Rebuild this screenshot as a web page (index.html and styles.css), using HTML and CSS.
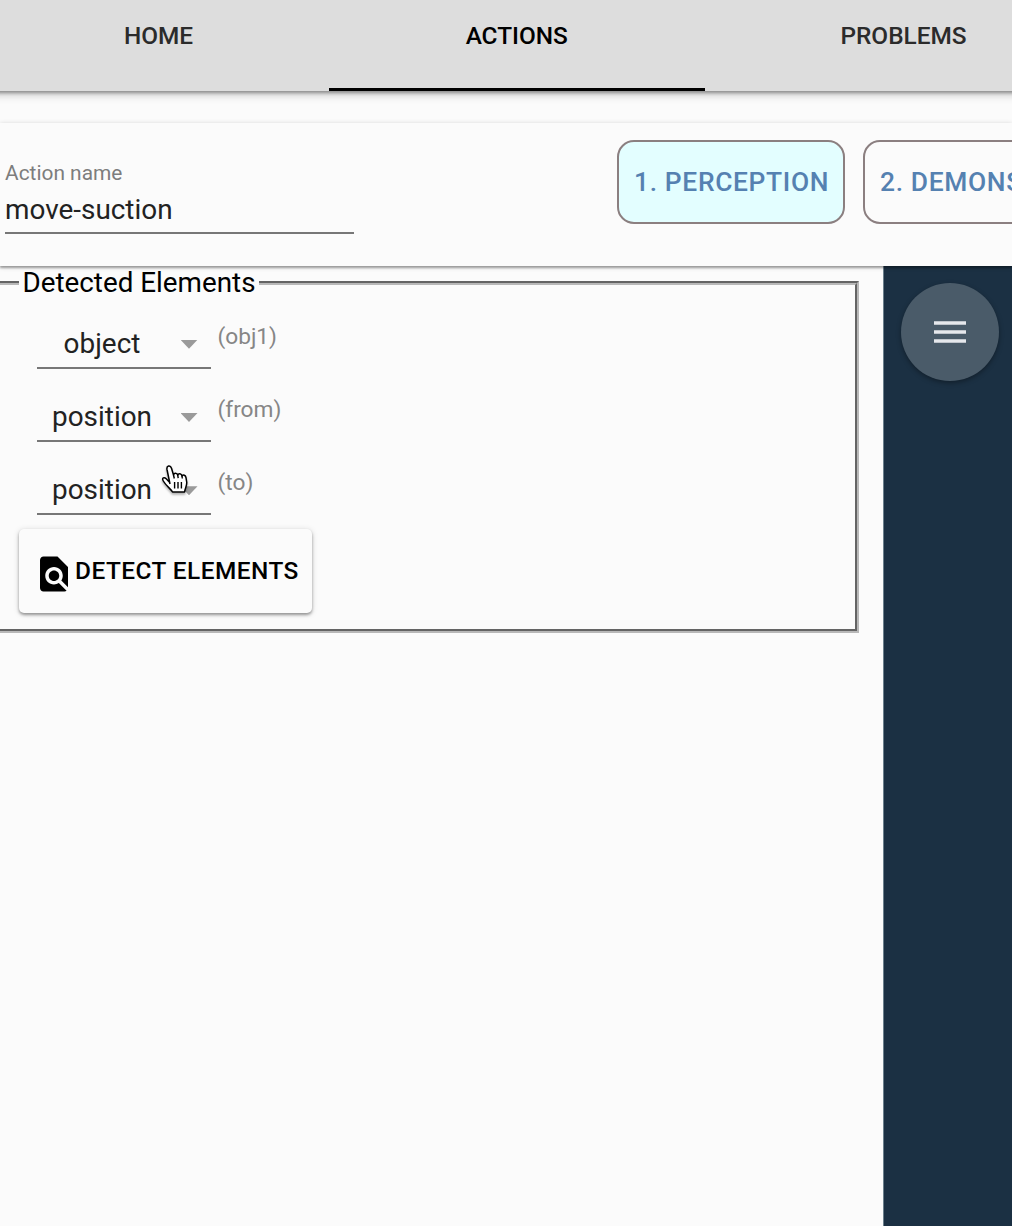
FILE: index.html
```html
<!DOCTYPE html>
<html lang="en">
<head>
<meta charset="utf-8">
<title>Actions</title>
<link rel="stylesheet" href="styles.css">
</head>
<body>
<nav class="tabs">
  <a class="tab tab-home"><span>HOME</span></a>
  <a class="tab tab-actions active"><span>ACTIONS</span></a>
  <a class="tab tab-problems"><span>PROBLEMS</span></a>
</nav>
<header class="toolbar">
  <label class="field">
    <span class="field-label">Action name</span>
    <span class="field-value">move-suction</span>
  </label>
  <div class="steps">
    <button class="step current">1. PERCEPTION</button>
    <button class="step">2. DEMONSTRATION</button>
  </div>
</header>
<main class="workspace">
  <section class="panel">
    <fieldset class="elements">
      <legend>Detected Elements</legend>
      <div class="row">
        <div class="select"><span class="value">object</span><i class="arrow"></i></div>
        <span class="hint">(obj1)</span>
      </div>
      <div class="row">
        <div class="select"><span class="value">position</span><i class="arrow"></i></div>
        <span class="hint">(from)</span>
      </div>
      <div class="row">
        <div class="select"><span class="value">position</span><i class="arrow"></i>
          <svg class="pointer" width="30" height="34" viewBox="0 0 30 34">
            <path d="M10 20 L7 5.500 C6.300 1.500 10.400 .7 11.500 4.300 L13.500 11 C14 8.700 17.200 8.700 17.700 11.200 C18.500 9 21.500 9.300 22 12 C23.300 10.300 25.600 11.200 26 13.600 L26.700 18 C27.200 21.500 25 24 24.600 28 L12.500 28 C11 25 6 21.800 3.300 17 C1.500 13.800 4.200 12.700 6.200 14.800 L9.500 18.200" fill="#fff" stroke="#000" stroke-width="1.500" stroke-linejoin="round"/>
            <path d="M14.600 18v6.500M18 18v6.500M21.400 18v6.500M13.500 11l.8 3.500M17.700 11.200l.5 3M22 12l.3 2.500" fill="none" stroke="#000" stroke-width="1.400"/>
          </svg>
        </div>
        <span class="hint">(to)</span>
      </div>
      <button class="detect">
        <svg class="detect-icon" viewBox="0 0 24 24"><path d="M20 19.590V8l-6-6H6c-1.100 0-1.990.9-1.990 2L4 20c0 1.100.89 2 1.990 2H18c.45 0 .85-.15 1.190-.4l-4.430-4.430c-.8.520-1.740.830-2.760.830-2.760 0-5-2.240-5-5s2.240-5 5-5 5 2.240 5 5c0 1.020-.31 1.960-.83 2.750L20 19.590zM9 13c0 1.660 1.340 3 3 3s3-1.340 3-3-1.340-3-3-3-3 1.340-3 3z"/></svg>
        <span>DETECT ELEMENTS</span>
      </button>
    </fieldset>
  </section>
  <aside class="viewer">
    <button class="menu" aria-label="Menu">
      <svg width="32" height="22" viewBox="0 0 32 22"><path d="M0 2h32M0 11h32M0 20h32" stroke="#e6e8ec" stroke-width="3.700"/></svg>
    </button>
  </aside>
</main>
</body>
</html>
```
FILE: styles.css
```css
* { box-sizing: border-box; }
body {
  margin: 0;
  height: 1226px;
  overflow: hidden;
  display: flex;
  flex-direction: column;
  background: #fbfbfb;
  color: #000;
  font-family: Roboto, sans-serif;
}
button { font-family: inherit; cursor: pointer; }
.tabs {
  flex: none;
  display: flex;
  height: 91px;
  margin: 0 -90px 32px -12px;
  background: #ddd;
  box-shadow: 0 2px 3px rgba(0,0,0,.3), 0 3px 9px rgba(0,0,0,.25);
}
.tab {
  flex: none;
  display: flex;
  justify-content: center;
  padding-top: 21px;
  font-size: 24.400px;
  line-height: 29px;
  font-weight: 500;
  color: #2b2b2b;
}
.tab-home { width: 341px; }
.tab-actions { width: 375.500px; }
.tab-problems { width: 398px; }
.tab.active { color: #000; border-bottom: 3.500px solid #000; }
.toolbar {
  flex: none;
  position: relative;
  z-index: 1;
  display: flex;
  justify-content: space-between;
  height: 143px;
  padding: 17px 0 0 5px;
  background: #fbfbfb;
  box-shadow: 0 2px 2px rgba(0,0,0,.3), 0 1px 5px rgba(0,0,0,.2);
}
.field {
  width: 349px;
  height: 94px;
  padding-top: 20px;
  display: flex;
  flex-direction: column;
  border-bottom: 2px solid #777;
}
.field-label { font-size: 20.900px; line-height: 26px; color: #7d7d7d; }
.field-value { margin-top: 7px; font-size: 27.900px; line-height: 33px; color: #222; }
.steps { display: flex; gap: 18px; width: 395px; }
.step {
  flex: none;
  height: 84px;
  padding: 0 0 0 15px;
  width: 228px;
  border: 2px solid #8b7f80;
  border-radius: 17px;
  background: transparent;
  color: #5581b1;
  font-size: 26.400px;
  font-weight: 500;
  letter-spacing: .65px;
  text-align: left;
  white-space: nowrap;
}
.step:last-child { width: 292px; }
.step.current { background: #e3feff; }
.workspace { flex: 1; display: flex; }
.panel { flex: 1; padding-right: 24px; }
.elements {
  height: 367px;
  margin: 0 0 0 -5px;
  padding: 0 0 0 20px;
  min-width: 0;
  border: 4px groove #b8b8b8;
}
.elements legend {
  margin-left: 0;
  padding: 0 4px 0 3.500px;
  font-size: 27.800px;
  line-height: 34px;
}
.row {
  display: flex;
  gap: 7px;
  height: 73.200px;
  padding: 0 0 0 17.500px;
}
.select {
  position: relative;
  display: flex;
  align-items: center;
  width: 174px;
  height: 68.500px;
  padding: 20px 13px 0 0;
  border-bottom: 2px solid #777;
}
.value { flex: 1; padding-right: 13px; text-align: center; font-size: 27.900px; color: #222; }
.arrow {
  width: 17px;
  height: 9px;
  margin-top: 2px;
  background: #9a9a9a;
  clip-path: polygon(0 0, 100% 0, 50% 100%);
}
.hint { padding-top: 23px; font-size: 22.700px; line-height: 28px; color: #868686; }
.pointer {
  position: absolute;
  left: 123px;
  top: 18px;
  filter: drop-shadow(0 2px 1px rgba(0,0,0,.3));
}
.detect {
  display: flex;
  align-items: center;
  width: 293px;
  height: 84px;
  margin-top: 9px;
  padding: 0 0 0 14px;
  border: 0;
  border-radius: 5px;
  background: #fbfbfb;
  box-shadow: 0 2px 3px rgba(0,0,0,.35), 0 1px 6px rgba(0,0,0,.15);
  font-size: 24.400px;
  font-weight: 500;
  letter-spacing: .47px;
  white-space: nowrap;
  color: #000;
}
.detect-icon { flex: none; width: 42px; height: 42px; margin-top: 7px; }
.viewer {
  width: 129px;
  padding: 17px 0 0 16.500px;
  background: #1b3043;
  border-left: 1px solid #6b7f8c;
}
.menu {
  display: flex;
  align-items: center;
  justify-content: center;
  width: 98px;
  height: 98px;
  padding: 0;
  border: 0;
  border-radius: 50%;
  background: #4a5b69;
  box-shadow: 0 2px 5px rgba(0,0,0,.35);
}
```
